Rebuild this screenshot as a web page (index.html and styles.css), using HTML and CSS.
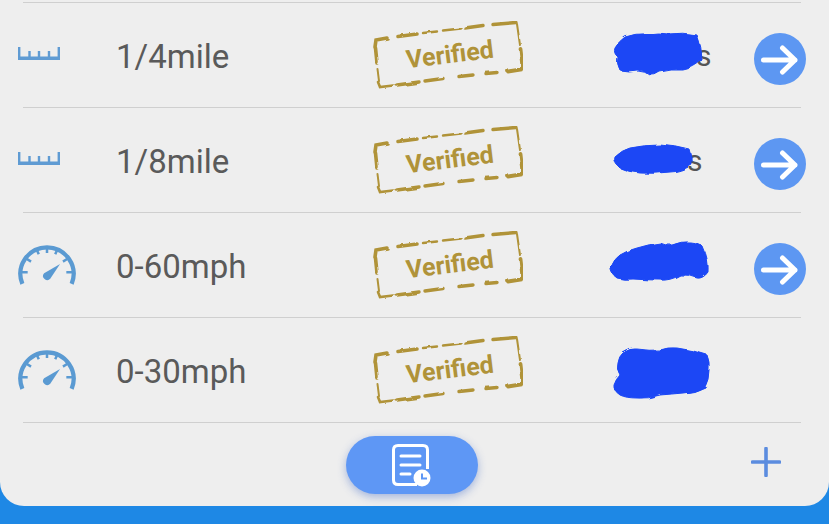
FILE: index.html
```html
<!DOCTYPE html>
<html lang="en">
<head>
<meta charset="utf-8">
<title>Performance records</title>
<link rel="stylesheet" href="styles.css">
</head>
<body>
<svg class="defs" width="0" height="0" aria-hidden="true">
  <!-- worn-ink edge for the stamp frames -->
  <filter id="worn" x="-5%" y="-10%" width="110%" height="120%">
    <feTurbulence type="fractalNoise" baseFrequency="0.1" numOctaves="2" seed="4"/>
    <feDisplacementMap in="SourceGraphic" scale="2.600"/>
    <feGaussianBlur stdDeviation="0.45"/>
  </filter>
  <!-- felt-tip edge for the hidden values -->
  <filter id="felt" x="-10%" y="-20%" width="120%" height="140%">
    <feTurbulence type="fractalNoise" baseFrequency="0.09" numOctaves="1" seed="7"/>
    <feDisplacementMap in="SourceGraphic" scale="5"/>
    <feGaussianBlur stdDeviation="0.7"/>
  </filter>
  <symbol id="ruler" viewBox="0 0 42 13">
    <path d="M1.200 0V11.500H40.800V0M11.500 4V11M21 4V11M31 4V11" fill="none" stroke="currentColor" stroke-width="2.400"/>
    <path d="M0 9.500H42V13H0Z" fill="currentColor"/>
  </symbol>
  <symbol id="gauge" viewBox="0 0 60 44">
    <path d="M4.500 42A27.500 27.500 0 1 1 55.500 42" fill="none" stroke="currentColor" stroke-width="4.400"/>
    <path d="M3 30H10M8 15.500L13.500 19M19 6L21.500 11.500M30 3V10M41 6L38.500 11.500M52 15.500L46.500 19M57 30H50" fill="none" stroke="currentColor" stroke-width="2.600"/>
    <path d="M43.500 21.500L33.500 36.500A4.200 4.200 0 1 1 27 31Z" fill="currentColor"/>
  </symbol>
  <symbol id="stamp-frame" viewBox="0 0 150 68">
    <g fill="none" stroke="currentColor" stroke-linecap="round" filter="url(#worn)">
      <path d="M2 26L3 19L14 17M25 15.500L44 13" stroke-width="3.600"/>
      <path d="M50 12L64 10.500M70 9.500L88 7.500" stroke-width="2.400"/>
      <path d="M92 7L110 4.500M120 3.500L143 1.500" stroke-width="3.400"/>
      <path d="M144 3L147 24" stroke-width="2"/>
      <path d="M147.500 28L149.500 46L148 48.500L135 50.500" stroke-width="3.800"/>
      <path d="M124 51.500L113 52.500M100 54L86 55.500" stroke-width="3.400"/>
      <path d="M70 57.500L52 60M46 61L24 64" stroke-width="3.400"/>
      <path d="M20 64.500L7 66L5 61" stroke-width="2.600"/>
      <path d="M2.500 27L4 42" stroke-width="3.600"/>
      <path d="M4.500 48L6 60" stroke-width="2"/>
    </g>
  </symbol>
  <symbol id="go" viewBox="0 0 52 52">
    <circle cx="26" cy="26" r="26" fill="currentColor"/>
    <path d="M9.500 27H41M28.500 15L41 27L28.500 39" fill="none" stroke="#fff" stroke-width="5" stroke-linecap="round" stroke-linejoin="round"/>
  </symbol>
</svg>

<main class="sheet">
  <hr class="rule">
  <section class="row">
    <svg class="ruler"><use href="#ruler"/></svg>
    <span class="label">1/4mile</span>
    <svg class="stamp" viewBox="0 0 150 68"><use href="#stamp-frame" width="150" height="68"/><text class="stamp-text" x="77" y="42" text-anchor="middle" transform="rotate(-7 77 34)">Verified</text></svg>
    <div class="value value-a">s
      <svg class="blot" viewBox="0 0 110 60"><path d="M7 23Q11 16 17 12Q28 8 39 9Q50 7 60 9Q75 7 89 10Q94 22 94 35Q86 43 75 45Q63 44 52 47Q47 51 42 50Q36 45 29 45Q20 47 12 45Q8 38 10 32Q5 28 7 23Z"/></svg>
    </div>
    <svg class="go"><use href="#go"/></svg>
  </section>
  <hr class="rule">
  <section class="row">
    <svg class="ruler"><use href="#ruler"/></svg>
    <span class="label">1/8mile</span>
    <svg class="stamp" viewBox="0 0 150 68"><use href="#stamp-frame" width="150" height="68"/><text class="stamp-text" x="77" y="42" text-anchor="middle" transform="rotate(-7 77 34)">Verified</text></svg>
    <div class="value value-b">s
      <svg class="blot" viewBox="0 0 110 60"><path d="M7 27Q14 20 22 18Q36 15 52 15Q68 16 82 20Q85 28 84 35Q72 42 62 42Q46 44 32 43Q20 42 12 38Q5 32 7 27Z"/></svg>
    </div>
    <svg class="go"><use href="#go"/></svg>
  </section>
  <hr class="rule">
  <section class="row">
    <svg class="gauge"><use href="#gauge"/></svg>
    <span class="label">0-60mph</span>
    <svg class="stamp" viewBox="0 0 150 68"><use href="#stamp-frame" width="150" height="68"/><text class="stamp-text" x="77" y="42" text-anchor="middle" transform="rotate(-7 77 34)">Verified</text></svg>
    <div class="value">
      <svg class="blot" viewBox="0 0 110 60"><path d="M3 32Q6 24 12 20Q20 15 29 13Q42 9 52 8Q58 11 64 10Q74 6 82 7Q92 8 95 12Q101 25 100 37Q95 44 89 43Q80 39 72 40Q62 46 52 45Q38 45 25 44Q15 45 9 43Q2 38 3 32Z"/></svg>
    </div>
    <svg class="go"><use href="#go"/></svg>
  </section>
  <hr class="rule">
  <section class="row">
    <svg class="gauge"><use href="#gauge"/></svg>
    <span class="label">0-30mph</span>
    <svg class="stamp" viewBox="0 0 150 68"><use href="#stamp-frame" width="150" height="68"/><text class="stamp-text" x="77" y="42" text-anchor="middle" transform="rotate(-7 77 34)">Verified</text></svg>
    <div class="value">
      <svg class="blot" viewBox="0 0 110 60"><path d="M10 23Q11 16 15 13Q22 8 29 9Q42 11 52 10Q60 7 69 8Q85 10 99 15Q102 22 101 30Q101 40 97 47Q86 53 75 53Q64 54 52 55Q41 59 29 58Q18 58 12 55Q5 50 6 45Q8 39 12 35Q8 29 10 23Z"/></svg>
    </div>
  </section>
  <hr class="rule">
  <footer class="actions">
    <button class="history" type="button" aria-label="History">
      <svg class="history-icon" viewBox="0 0 40 44">
        <path d="M26 41.500H7Q2.500 41.500 2.500 37V7Q2.500 2.500 7 2.500H32Q36.500 2.500 36.500 7V26" fill="none" stroke="#fff" stroke-width="3"/>
        <path d="M10 13H29M10 22H29M10 31H19" fill="none" stroke="#fff" stroke-width="3" stroke-linecap="round"/>
        <circle cx="31" cy="35" r="8.500" fill="#fff"/>
        <path d="M31 30.500V35.500H36" fill="none" stroke="#5e97f5" stroke-width="2"/>
      </svg>
    </button>
    <svg class="plus" viewBox="0 0 30 30" aria-label="Add"><path d="M15 1.500V28.500M1.500 15H28.500" fill="none" stroke="currentColor" stroke-width="3.600" stroke-linecap="round"/></svg>
  </footer>
</main>
</body>
</html>
```

FILE: styles.css
```css
* {
  box-sizing: border-box;
}

html,
body {
  margin: 0;
  height: 524px;
  overflow: hidden;
  background: #1e88e5;
  font-family: Roboto, "Liberation Sans", sans-serif;
}

.defs {
  position: absolute;
}

.sheet {
  height: 506px;
  padding-top: 2px;
  background: #eeeeee;
  border-radius: 0 0 24px 24px;
}

.rule {
  height: 1px;
  margin: 0 28px 0 23px;
  border: 0;
  background: #cfcfcf;
}

.row {
  display: grid;
  grid-template-columns: 99px 256px 150px 230px 53px;
  align-items: center;
  height: 104px;
  padding-left: 18px;
}

.ruler {
  width: 42px;
  height: 13px;
  margin-top: -3px;
  color: #5f9bd3;
}

.gauge {
  width: 58px;
  height: 43px;
  margin-top: -2px;
  color: #5a9ad2;
}

.label {
  margin: 2px 0 0 -1px;
  font-size: 33px;
  color: #5a5a5a;
}

.stamp {
  width: 150px;
  height: 68px;
  color: #b09339;
}

.stamp-text {
  font: 700 25px Roboto, "Liberation Sans", sans-serif;
  fill: #b09339;
}

.value {
  position: relative;
  height: 60px;
  line-height: 62px;
  font-size: 30px;
  color: #555555;
}

.value-a {
  padding-left: 173px;
}

.value-b {
  padding-left: 164px;
}

.blot {
  position: absolute;
  top: 0;
  left: 85px;
  width: 110px;
  height: 60px;
  overflow: visible;
  fill: #1a47f5;
  stroke: #1a47f5;
  stroke-width: 1;
  filter: url(#felt);
}

.go {
  width: 52px;
  height: 52px;
  margin: 8px 0 0 1px;
  color: #5d97f2;
}

.actions {
  display: flex;
  align-items: flex-start;
  padding: 13px 48px 0 346px;
}

.history {
  display: flex;
  align-items: center;
  justify-content: center;
  width: 132px;
  height: 58px;
  padding: 0;
  border: 0;
  border-radius: 29px;
  background: #5e97f5;
  box-shadow: 0 3px 9px rgba(70, 110, 200, 0.45);
}

.history-icon {
  width: 40px;
  height: 44px;
  margin-right: 2px;
}

.plus {
  width: 30px;
  height: 30px;
  margin: 11px 0 0 auto;
  color: #5b8cdf;
}
```
